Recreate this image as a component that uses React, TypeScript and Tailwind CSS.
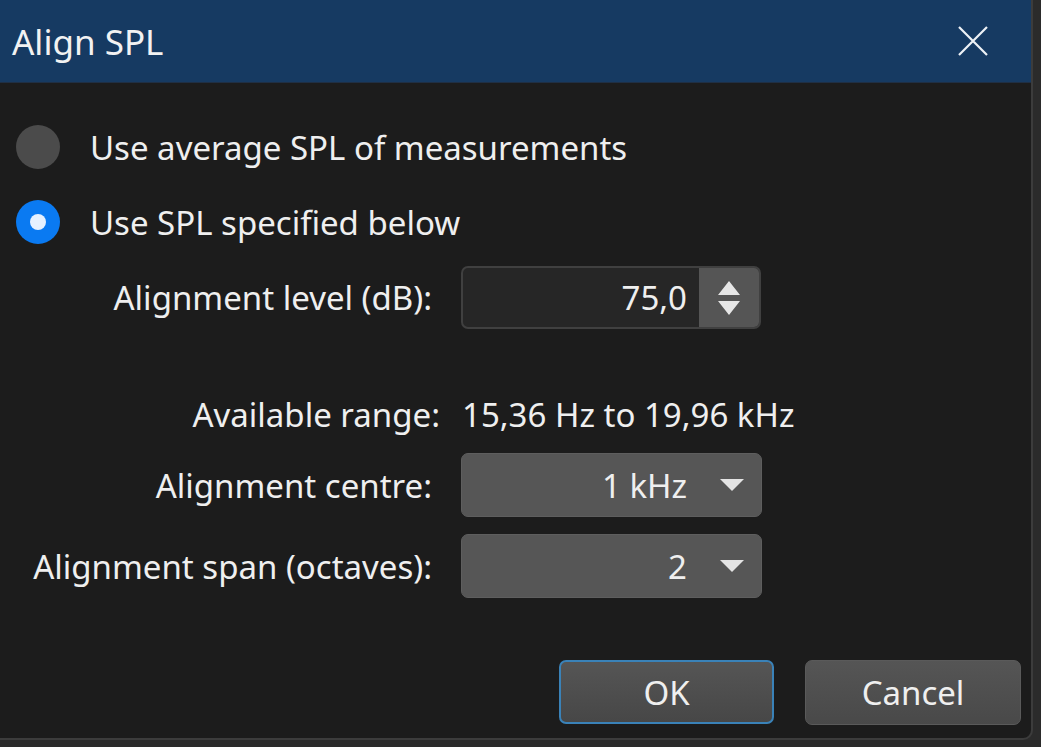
import React from 'react';

const font = { fontFamily: '"Noto Sans", "Open Sans", sans-serif' };

function Radio({ checked, label }: { checked?: boolean; label: string }) {
  return (
    <div className="flex items-center h-[56px]">
      <div className="w-[76px] flex justify-start pl-[16px]">
        {checked ? (
          <div className="w-[44px] h-[44px] rounded-full bg-[#0a7af2] flex items-center justify-center">
            <div className="w-[16px] h-[16px] rounded-full bg-[#e6f1ff]" />
          </div>
        ) : (
          <div className="w-[44px] h-[44px] rounded-full bg-[#4b4b4b]" />
        )}
      </div>
      <span className="ml-[14px] text-[33px] leading-[45px] text-[#efefef]">{label}</span>
    </div>
  );
}

function Combo({ value }: { value: string }) {
  return (
    <div className="w-[301px] h-[64px] rounded-[7px] bg-[#565656] border border-[#5e5e5e] flex items-center justify-end pr-[16px]">
      <span className="text-[33px] leading-[45px] text-[#efefef]">{value}</span>
      <svg width="26" height="14" viewBox="0 0 26 14" className="ml-[32px]">
        <path d="M1 1 L25 1 L13 13 Z" fill="#e4e4e4" />
      </svg>
    </div>
  );
}

export default function App() {
  return (
    <div className="w-[1041px] h-[747px] bg-[#2b2b2b] overflow-hidden" style={font}>
      <div className="w-[1033px] h-[740px] bg-[#1c1c1c] border-r-2 border-b-2 border-[#3c3c3c] rounded-br-[10px] flex flex-col">
        {/* Title bar */}
        <div className="h-[83px] bg-[#163a62] flex items-center justify-between pl-[12px] pr-[42px] border-b border-[#1f2f44]">
          <span className="text-[35px] leading-[45px] text-[#f2f2f2]">Align SPL</span>
          <svg width="32" height="32" viewBox="0 0 32 32">
            <path d="M2 2 L30 30 M30 2 L2 30" stroke="#eef2f6" strokeWidth="2.2" />
          </svg>
        </div>

        <div className="flex flex-col pt-[36px]">
          <Radio label="Use average SPL of measurements" />
          <div className="h-[19px]" />
          <Radio checked label="Use SPL specified below" />

          {/* Alignment level */}
          <div className="flex items-center mt-[16px]">
            <span className="w-[432px] text-right text-[33px] leading-[45px] text-[#efefef]">Alignment level (dB):</span>
            <div className="ml-[29px] w-[300px] h-[63px] rounded-[7px] bg-[#262626] border-2 border-[#404040] flex overflow-hidden">
              <div className="flex-1 flex items-center justify-end pr-[12px]">
                <span className="text-[33px] leading-[45px] text-[#efefef]">75,0</span>
              </div>
              <div className="w-[60px] bg-[#555555] flex items-center justify-center">
                <svg width="26" height="40" viewBox="0 0 26 40">
                  <path d="M13 3 L24 17 L2 17 Z M2 23 L24 23 L13 37 Z" fill="#e6e6e6" />
                </svg>
              </div>
            </div>
          </div>

          {/* Available range */}
          <div className="flex items-center mt-[63px]">
            <span className="w-[440px] text-right text-[33px] leading-[45px] text-[#efefef]">Available range:</span>
            <span className="ml-[22px] text-[33px] leading-[45px] text-[#efefef]">15,36 Hz to 19,96 kHz</span>
          </div>

          <div className="flex items-center mt-[16px]">
            <span className="w-[432px] text-right text-[33px] leading-[45px] text-[#efefef]">Alignment centre:</span>
            <div className="ml-[29px]">
              <Combo value="1 kHz" />
            </div>
          </div>

          <div className="flex items-center mt-[17px]">
            <span className="w-[432px] text-right text-[33px] leading-[45px] text-[#efefef]">Alignment span (octaves):</span>
            <div className="ml-[29px]">
              <Combo value="2" />
            </div>
          </div>

          {/* Buttons */}
          <div className="flex justify-end gap-[31px] pr-[10px] mt-[62px]">
            <button className="w-[215px] h-[64px] rounded-[7px] bg-gradient-to-b from-[#555555] to-[#474747] border-2 border-[#3a82b8] text-[33px] leading-[45px] text-[#efefef]">
              OK
            </button>
            <button className="w-[216px] h-[65px] rounded-[7px] bg-gradient-to-b from-[#555555] to-[#494949] border border-[#5a5a5a] text-[33px] leading-[45px] text-[#efefef]">
              Cancel
            </button>
          </div>
        </div>
      </div>
    </div>
  );
}
